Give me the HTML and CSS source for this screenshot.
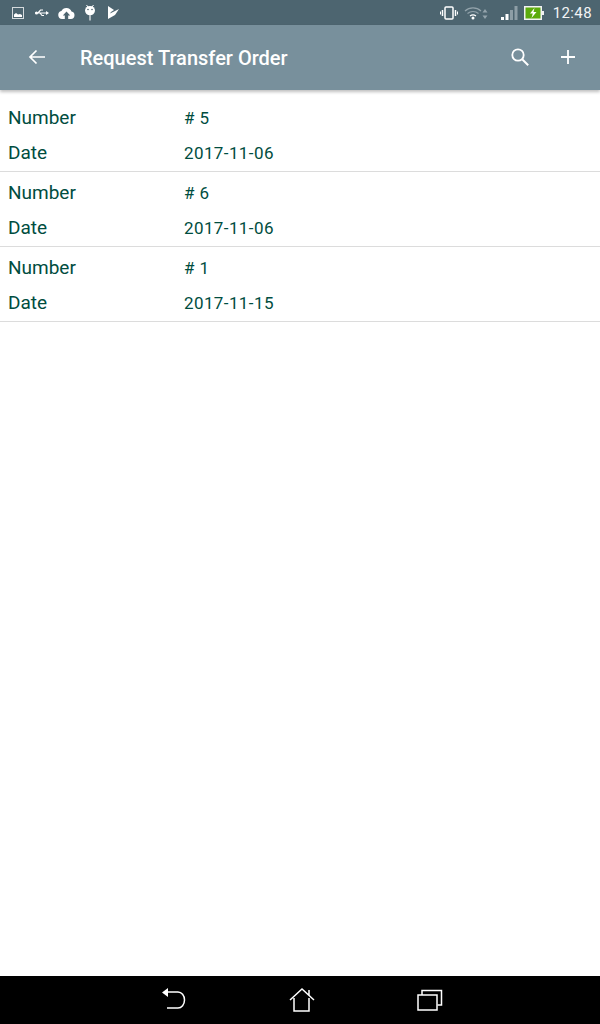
FILE: index.html
```html
<!DOCTYPE html>
<html lang="en">
<head>
    <meta charset="UTF-8">
    <meta name="viewport" content="width=device-width, initial-scale=1.0">
    <title>Request Transfer Order</title>
    <link rel="stylesheet" href="styles.css">
</head>
<body>
    <!-- Status bar -->
    <div class="status-bar">
        <div class="status-icons">
            <svg class="icon" width="14" height="14" viewBox="0 0 14 14"><rect x="1.500" y="1.500" width="11" height="11" fill="none" stroke="#d5dadd"/><path d="M3 11V8.500l2-1.500 2 1.500 2-.5 2 1V11z" fill="#fff"/></svg>
            <svg class="icon icon-usb" width="14" height="10" viewBox="0 0 14 10"><path d="M0 5h12.500M3 5l2.500-3H8M5 5l2 2.500h2" fill="none" stroke="#fff" stroke-width="1.200"/><circle cx="1.500" cy="5" r="1.500" fill="#fff"/><path d="M11 3l3 2-3 2z" fill="#fff"/></svg>
            <svg class="icon icon-cloud" width="17" height="12" viewBox="0 0 17 12"><path d="M4 12a4 4 0 0 1-.6-7.900A5.500 5.500 0 0 1 13.500 4.500 3.800 3.800 0 0 1 13 12h-2.800V8.500h2L8.500 4.500l-3.700 4h2V12z" fill="#fff"/></svg>
            <svg class="icon icon-droid" width="12" height="17" viewBox="0 0 12 17"><path d="M2.500 1l1.500 2M9.500 1L8 3" stroke="#fff"/><path d="M1 6.500a5 4.500 0 0 1 10 0 5 4.800 0 0 1-10 0z" fill="#fff"/><circle cx="4" cy="5.500" r=".8" fill="#4d6570"/><circle cx="8" cy="5.500" r=".8" fill="#4d6570"/><rect x="5.200" y="11" width="1.600" height="5.500" fill="#c9d0d4"/></svg>
            <svg class="icon icon-flag" width="13" height="13" viewBox="0 0 13 13"><path d="M1 0l6 4-3 2-1 1.500L8 5l4-2-4 6-4.500 1L8 9l-7 4z" fill="#fff"/></svg>
        </div>
        <div class="status-right">
            <svg class="icon" width="18" height="14" viewBox="0 0 18 14"><rect x="5" y="1" width="8" height="12" rx="1" fill="none" stroke="#fff" stroke-width="1.500"/><path d="M2.500 4v6M15.500 4v6" stroke="#fff" stroke-width="1.500"/><path d="M0.500 5.500v3M17.500 5.500v3" stroke="#fff"/></svg>
            <svg class="icon icon-wifi" width="26" height="14" viewBox="0 0 26 14"><path d="M1 5a12 12 0 0 1 16 0M3.500 7.500a8.500 8.500 0 0 1 11 0" fill="none" stroke="#93a3ab" stroke-width="1.200"/><path d="M6 10a5 5 0 0 1 6 0" fill="none" stroke="#fff" stroke-width="1.200"/><circle cx="9" cy="12" r="1.500" fill="#fff"/><path d="M21 3l2.500 3.500h-5zM21 13l2.500-3.500h-5z" fill="#93a3ab"/></svg>
            <svg class="icon icon-signal" width="17" height="15" viewBox="0 0 17 15"><rect x="0" y="12" width="3" height="3" fill="#fff"/><rect x="4.500" y="9" width="3" height="6" fill="#fff"/><rect x="9" y="5" width="3" height="10" fill="#8d9ea6"/><rect x="13.500" y="1" width="3" height="14" fill="#8d9ea6"/></svg>
            <svg class="icon icon-battery" width="20" height="14" viewBox="0 0 20 14"><rect x=".75" y=".75" width="16.500" height="12.500" fill="#5cab0c" stroke="#f2f2f2" stroke-width="1.500"/><rect x="17.500" y="5" width="2.500" height="4" fill="#f2f2f2"/><path d="M10.500 2L6 7.500h2.800L7.500 12 12.500 6H9.500z" fill="#fff"/></svg>
            <span class="clock">12:48</span>
        </div>
    </div>

    <!-- Toolbar -->
    <div class="toolbar">
        <svg class="back-arrow" width="18" height="16" viewBox="0 0 18 16"><path d="M17 8H2M8.500 1.500L2 8l6.500 6.500" fill="none" stroke="#fff" stroke-width="1.700"/></svg>
        <div class="toolbar-title">Request Transfer Order</div>
        <svg class="search-icon" width="20" height="20" viewBox="0 0 20 20"><circle cx="8" cy="8" r="5.700" fill="none" stroke="#fff" stroke-width="1.800"/><path d="M12.200 12.200l6 6" stroke="#fff" stroke-width="2"/></svg>
        <svg class="plus-icon" width="16" height="16" viewBox="0 0 16 16"><path d="M8 1v14M1 8h14" stroke="#fff" stroke-width="1.800"/></svg>
    </div>

    <!-- Orders -->
    <div class="order-list">
        <div class="order-row">
            <div class="order-line"><span class="order-label">Number</span><span class="order-value"># 5</span></div>
            <div class="order-line"><span class="order-label">Date</span><span class="order-value">2017-11-06</span></div>
        </div>
        <div class="order-row">
            <div class="order-line"><span class="order-label">Number</span><span class="order-value"># 6</span></div>
            <div class="order-line"><span class="order-label">Date</span><span class="order-value">2017-11-06</span></div>
        </div>
        <div class="order-row">
            <div class="order-line"><span class="order-label">Number</span><span class="order-value"># 1</span></div>
            <div class="order-line"><span class="order-label">Date</span><span class="order-value">2017-11-15</span></div>
        </div>
    </div>

    <!-- Navigation bar -->
    <div class="nav-bar">
        <svg width="24" height="26" viewBox="0 0 24 26"><path d="M6 5h10a6.500 8 0 0 1 0 16H5" fill="none" stroke="#fff" stroke-width="1.500"/><path d="M0 5.500L6 1v9z" fill="#fff"/></svg>
        <svg width="26" height="26" viewBox="0 0 26 26"><path d="M1 13L13 2l12 11M5 11v13h15V11M20 3v5" fill="none" stroke="#fff" stroke-width="1.500"/></svg>
        <svg class="nav-recents" width="26" height="22" viewBox="0 0 26 22"><rect x="1" y="6" width="19" height="15" fill="none" stroke="#fff" stroke-width="1.500"/><path d="M5 6V1.500h19.500V16h-4" fill="none" stroke="#fff" stroke-width="1.500"/></svg>
    </div>
</body>
</html>
```

FILE: styles.css
```css
body {
    font-family: Roboto, "Liberation Sans", sans-serif;
    margin: 0;
    padding: 0;
    width: 600px;
    height: 1024px;
    display: flex;
    flex-direction: column;
    background-color: #fff;
    overflow: hidden;
}
.status-bar {
    height: 25px;
    background-color: #4d6570;
    display: flex;
    align-items: center;
    justify-content: space-between;
    padding: 0 8px 0 11px;
    flex-shrink: 0;
}
.status-icons, .status-right {
    display: flex;
    align-items: center;
}
.status-icons {
    gap: 9px;
}
.status-right {
    gap: 6px;
}
.icon {
    display: block;
}
.icon-usb {
    margin-left: 1px;
}
.icon-flag {
    margin-left: 2px;
}
.icon-signal {
    margin-left: 5px;
}
.clock {
    color: #f2f4f5;
    font-size: 15px;
    margin-left: 3px;
    letter-spacing: 0.4px;
}
.toolbar {
    height: 65px;
    background-color: #78909c;
    display: flex;
    align-items: center;
    box-shadow: 0 2px 3px rgba(0, 0, 0, 0.25);
    flex-shrink: 0;
    position: relative;
}
.back-arrow {
    margin-left: 28px;
    margin-bottom: 2px;
}
.toolbar-title {
    flex: 1;
    margin-left: 34px;
    color: #fff;
    font-size: 20px;
    font-weight: 500;
}
.search-icon {
    margin-right: 30px;
    margin-bottom: 2px;
}
.plus-icon {
    margin-right: 24px;
    margin-bottom: 2px;
}
.order-list {
    flex: 1;
    padding-top: 7px;
}
.order-row {
    padding-bottom: 4px;
    border-bottom: 1px solid #dcdcdc;
}
.order-line {
    height: 30px;
    display: flex;
    align-items: center;
    color: #004d40;
    padding-left: 8px;
}
.order-line:first-child {
    height: 40px;
}
.order-label {
    width: 176px;
    font-size: 19px;
}
.order-value {
    font-size: 17px;
    letter-spacing: 0.4px;
    padding-top: 1px;
}
.nav-bar {
    height: 48px;
    background-color: #000;
    display: flex;
    align-items: center;
    justify-content: center;
    gap: 103px;
    padding-left: 4px;
    flex-shrink: 0;
}
.nav-recents {
    margin-left: -1px;
}
```
